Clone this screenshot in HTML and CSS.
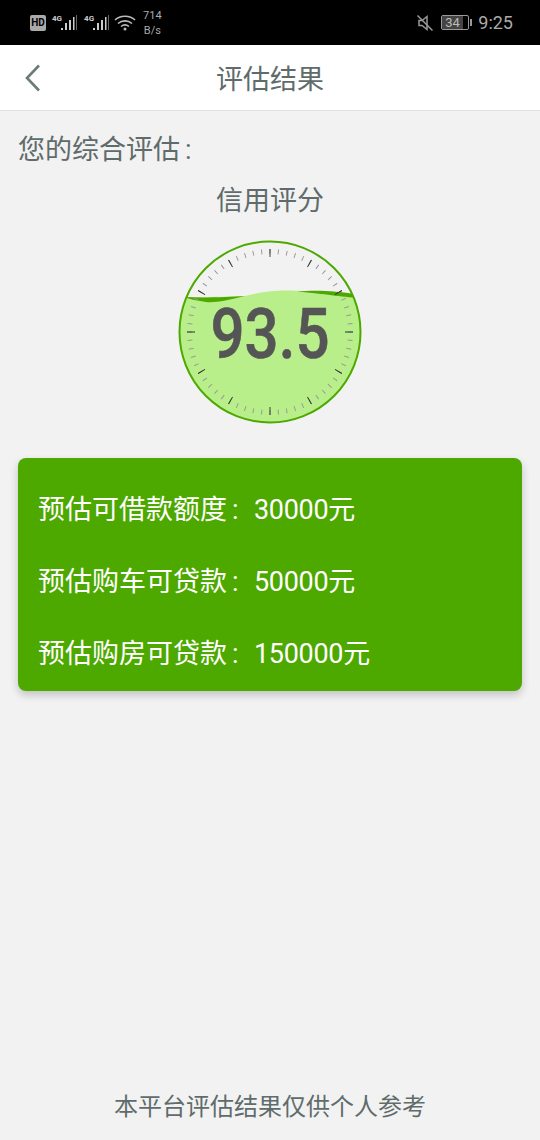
FILE: index.html
```html
<!DOCTYPE html>
<html>
<head>
<meta charset="UTF-8">
<meta name="viewport" content="width=device-width, initial-scale=1.0">
<title>评估结果</title>
<link rel="stylesheet" href="styles.css">
</head>
<body>
<div class="page">
  <div class="status-bar">
    <div class="status-left">
      <span class="hd">HD</span>
      <span class="signal">
        <span class="net">4G</span>
        <svg width="18" height="17" viewBox="0 0 18 17"><path d="M1 14h2v2H1zM5 9h2v7H5zM9 6h2v10H9z" fill="#ccc"/><path d="M13 3h1.500v13H13z" fill="#ccc"/><path d="M16 1h1v15h-1z" fill="#666"/></svg>
      </span>
      <span class="signal">
        <span class="net">4G</span>
        <svg width="18" height="17" viewBox="0 0 18 17"><path d="M1 14h2v2H1zM5 9h2v7H5zM9 6h2v10H9z" fill="#ccc"/><path d="M13 3h1.500v13H13z" fill="#ccc"/><path d="M16 1h1v15h-1z" fill="#666"/></svg>
      </span>
      <svg class="wifi" width="22" height="18" viewBox="0 0 22 18" fill="none" stroke="#bbb" stroke-width="1.600">
        <path d="M1 6c5-5 15-5 20 0"/>
        <path d="M4 9.500c4-3.500 10-3.500 14 0"/>
        <path d="M7 12.500c2.500-2 5.500-2 8 0"/>
        <circle cx="11" cy="15" r="1.500" fill="#bbb" stroke="none"/>
      </svg>
      <div class="speed"><span>714</span><span>B/s</span></div>
    </div>
    <div class="status-right">
      <svg width="18" height="18" viewBox="0 0 18 18" fill="none" stroke="#999" stroke-width="1.500">
        <path d="M3 6.500v5h3l5 4v-13l-5 4z"/>
        <path d="M1.500 1.500l15 15"/>
      </svg>
      <div class="battery"><span class="battery-level">34</span></div>
      <span class="battery-cap"></span>
      <span class="clock">9:25</span>
    </div>
  </div>

  <div class="header">
    <svg class="back" width="18" height="28" viewBox="0 0 18 28" fill="none" stroke="#6b7b7b" stroke-width="2.600">
      <path d="M15 1.500L3 14l12 12.500"/>
    </svg>
    <span class="title">评估结果</span>
  </div>

  <div class="content">
    <div class="summary">您的综合评估<span class="colon">:</span></div>
    <div class="score-label">信用评分</div>

    <svg class="gauge" width="184" height="184" viewBox="0 0 184 184">
      <defs>
        <clipPath id="dial"><circle cx="92" cy="92" r="90.500"/></clipPath>
      </defs>
      <g clip-path="url(#dial)">
        <path d="M0 57C30 57 50 57 67 56C80 53 90 50.500 110 50.500C130 50.500 150 54 184 58V184H0Z" fill="#b9ef8a"/>
        <path d="M5 57C25 58 50 57 67 56C50 60 38 63 28 62C20 61 12 59 5 57Z" fill="#4da800"/>
        <path d="M119 51.500C135 50 155 50 184 55V58C160 57 150 54 119 51.500Z" fill="#4da800"/>
      </g>
      <circle class="ticks-minor" cx="92" cy="92" r="80.500" pathLength="360"/>
      <circle class="ticks-major" cx="92" cy="92" r="79" pathLength="360"/>
      <circle class="dial-ring" cx="92" cy="92" r="90.500"/>
      <text class="score" x="92" y="118" text-anchor="middle" textLength="119" lengthAdjust="spacingAndGlyphs">93.5</text>
    </svg>

    <div class="result-card">
      <div class="result-row">预估可借款额度<span class="colon">:</span><span class="amount">30000元</span></div>
      <div class="result-row">预估购车可贷款<span class="colon">:</span><span class="amount">50000元</span></div>
      <div class="result-row">预估购房可贷款<span class="colon">:</span><span class="amount">150000元</span></div>
    </div>

    <div class="footer-note">本平台评估结果仅供个人参考</div>
  </div>
</div>
</body>
</html>
```

FILE: styles.css
```css
body {
  margin: 0;
  font-family: Roboto, "Noto Sans CJK SC", sans-serif;
  background-color: #f2f2f2;
  color: #606b6b;
}

.page {
  display: flex;
  flex-direction: column;
  height: 1140px;
  overflow: hidden;
}

.status-bar {
  display: flex;
  justify-content: space-between;
  align-items: center;
  height: 45px;
  padding: 0 27px 0 30px;
  background-color: #000;
  color: #aaa;
}

.status-left,
.status-right {
  display: flex;
  align-items: center;
}

.hd {
  width: 16px;
  height: 16px;
  line-height: 16px;
  border-radius: 2px;
  background-color: #aaa;
  color: #000;
  font-size: 10px;
  font-weight: 700;
  text-align: center;
  margin-right: 6px;
}

.signal {
  display: flex;
  align-items: flex-start;
  height: 17px;
  margin-right: 6px;
}

.net {
  font-size: 8px;
  font-weight: 700;
  line-height: 9px;
  color: #ccc;
}

.signal svg {
  margin-left: -2px;
}

.wifi {
  margin: 0 7px 0 -2px;
}

.speed {
  display: flex;
  flex-direction: column;
  align-items: center;
  font-size: 11px;
  line-height: 15px;
}

.battery {
  width: 26px;
  height: 13px;
  margin-left: 7px;
  border: 1px solid #999;
  border-radius: 2px;
}

.battery-level {
  display: block;
  width: 18px;
  height: 13px;
  padding-left: 3px;
  line-height: 13px;
  background-color: #444;
  color: #bbb;
  font-size: 13px;
}

.battery-cap {
  width: 2px;
  height: 7px;
  margin: 0 6px 0 1px;
  background-color: #999;
}

.clock {
  font-size: 18px;
  color: #aaa;
}

.header {
  display: flex;
  justify-content: center;
  align-items: center;
  position: relative;
  height: 66px;
  background-color: #fff;
  border-bottom: 1px solid #e2e2e2;
  box-sizing: border-box;
  flex-shrink: 0;
}

.back {
  position: absolute;
  left: 24px;
  top: 19px;
}

.title {
  font-size: 27px;
}

.content {
  display: flex;
  flex-direction: column;
  flex: 1;
  padding: 0 18px;
}

.summary {
  font-size: 27px;
  line-height: 38px;
  margin-top: 20px;
}

.colon {
  display: inline-block;
  width: 27px;
  padding-left: 5px;
  box-sizing: border-box;
}

.score-label {
  font-size: 27px;
  line-height: 38px;
  margin-top: 13px;
  text-align: center;
}

.gauge {
  display: block;
  align-self: center;
  margin-top: 20px;
}

.ticks-minor,
.ticks-major,
.dial-ring {
  fill: none;
}

.ticks-minor {
  stroke: #999;
  stroke-width: 5;
  stroke-dasharray: 0.7 5.3;
  stroke-dashoffset: 0.35;
}

.ticks-major {
  stroke: #333;
  stroke-width: 8;
  stroke-dasharray: 0.7 29.3;
  stroke-dashoffset: 0.35;
}

.dial-ring {
  stroke: #4da800;
  stroke-width: 2;
}

.score {
  font-family: Roboto, sans-serif;
  font-size: 70px;
  font-weight: 500;
  fill: #555;
  stroke: #555;
  stroke-width: 0.6;
}

.result-card {
  display: flex;
  flex-direction: column;
  justify-content: space-between;
  height: 233px;
  margin-top: 34px;
  padding: 33px 20px 18px;
  box-sizing: border-box;
  border-radius: 8px;
  background-color: #4da800;
  box-shadow: 0 4px 8px rgba(0, 0, 0, 0.2);
  color: #fff;
  font-size: 27px;
}

.result-row {
  line-height: 38px;
  white-space: nowrap;
}

.amount {
  letter-spacing: -0.3px;
}

.footer-note {
  margin-top: auto;
  margin-bottom: 15px;
  font-size: 24px;
  line-height: 36px;
  text-align: center;
}
```
